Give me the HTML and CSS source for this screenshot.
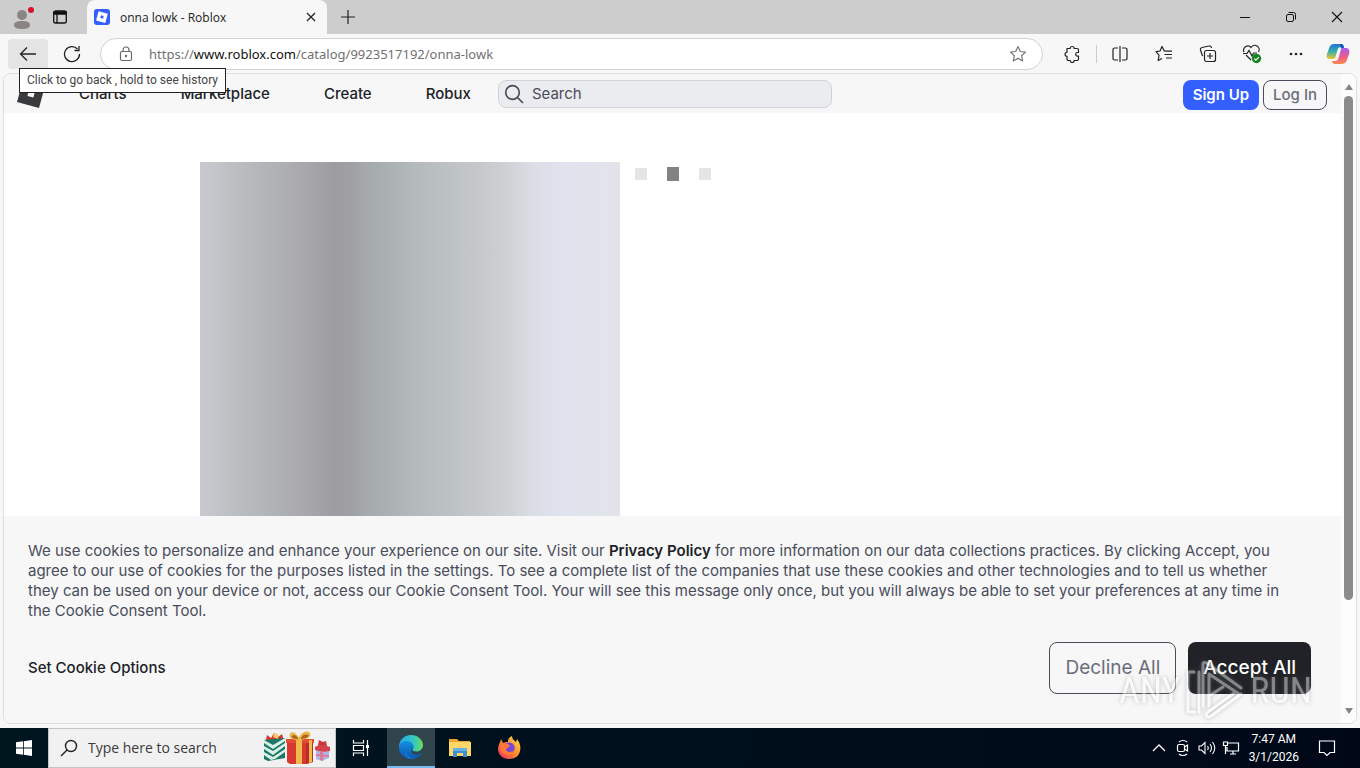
FILE: index.html
```html
<!DOCTYPE html>
<html lang="en">
<head>
<meta charset="utf-8">
<title>onna lowk - Roblox</title>
<link rel="stylesheet" href="styles.css">
</head>
<body>
<div class="desktop">
  <header class="tabstrip">
    <button class="icon-btn profile" aria-label="Profile"><svg width="26" height="26" viewBox="0 0 26 26"><circle cx="11" cy="11" r="5" fill="#8a8583"/><path d="M3 21c0-3 3-4 8-4s8 1 8 4-3.500 4-8 4-8-1-8-4z" fill="#8a8583"/><circle cx="20" cy="6" r="3" fill="#d3122b"/></svg></button>
    <button class="icon-btn workspaces" aria-label="Tab actions"><svg width="16" height="16" viewBox="0 0 16 16" fill="none" stroke="#111" stroke-width="1.300"><rect x="1.700" y="2" width="12.600" height="12" rx="2"/><path d="M2 3h12v2H2z" fill="#111"/><path d="M5 5v9"/></svg></button>
    <div class="tab">
      <svg width="16" height="16" viewBox="0 0 16 16"><rect width="16" height="16" rx="3" fill="#335fff"/><path d="M4.600 2.200l9.200 2.500-2.500 9.200-9.200-2.500z" fill="#fff"/><path d="M7 6.300l2.700.7-.7 2.700-2.700-.7z" fill="#335fff"/></svg>
      <span class="tab-title">onna lowk - Roblox</span>
      <button class="icon-btn" aria-label="Close tab"><svg width="12" height="12" viewBox="0 0 12 12" stroke="#222" stroke-width="1.300"><path d="M2 2l8 8M10 2l-8 8"/></svg></button>
    </div>
    <button class="icon-btn new-tab" aria-label="New tab"><svg width="16" height="16" viewBox="0 0 16 16" stroke="#222" stroke-width="1.200"><path d="M8 1v14M1 8h14"/></svg></button>
    <div class="window-controls">
      <button class="icon-btn" aria-label="Minimize"><svg width="12" height="12" viewBox="0 0 12 12" stroke="#111"><path d="M1 6.500h10"/></svg></button>
      <button class="icon-btn" aria-label="Restore"><svg width="12" height="12" viewBox="0 0 12 12" fill="none" stroke="#111"><rect x="1.500" y="3.500" width="7" height="7" rx="1.500"/><path d="M3.500 1.500h5a2 2 0 0 1 2 2v5"/></svg></button>
      <button class="icon-btn" aria-label="Close"><svg width="12" height="12" viewBox="0 0 12 12" stroke="#111" stroke-width="1.100"><path d="M1 1l10 10M11 1L1 11"/></svg></button>
    </div>
  </header>

  <div class="toolbar">
    <div class="back-wrap">
      <button class="icon-btn back" aria-label="Back"><svg width="18" height="16" viewBox="0 0 18 16" fill="none" stroke="#222" stroke-width="1.300"><path d="M17 8H1.500M8 1.500L1.500 8 8 14.500"/></svg></button>
      <span class="tooltip" role="tooltip">Click to go back , hold to see history</span>
    </div>
    <button class="icon-btn reload" aria-label="Refresh"><svg width="18" height="18" viewBox="0 0 18 18" fill="none" stroke="#222" stroke-width="1.300"><path d="M16.500 9A7.500 7.500 0 1 1 14.500 4M16 1v4.500h-4.500"/></svg></button>
    <div class="address">
      <svg width="14" height="16" viewBox="0 0 14 16" fill="none" stroke="#6b6b6b" stroke-width="1.200"><rect x="1.500" y="5.500" width="11" height="9" rx="1.500"/><path d="M4 5.500V4a3 3 0 0 1 6 0v1.500"/><circle cx="7" cy="10" r=".6" fill="#6b6b6b"/></svg>
      <span class="url">https://<b>www.roblox.com</b>/catalog/9923517192/onna-lowk</span>
      <button class="icon-btn" aria-label="Favorite"><svg width="18" height="18" viewBox="0 0 18 18" fill="none" stroke="#777" stroke-width="1.200" stroke-linejoin="round"><path d="M9 1.500l2.300 5 5.200.6-3.900 3.600 1.100 5.300L9 13.400 4.300 16l1.100-5.300L1.500 7.100l5.200-.6z"/></svg></button>
    </div>
    <div class="tools">
      <button class="icon-btn ext" aria-label="Extensions"><svg width="18" height="18" viewBox="0 0 18 18" fill="none" stroke="#222" stroke-width="1.200" stroke-linejoin="round"><path d="M4 3.500h3.200a2 2 0 0 1 4 0H14A1.500 1.500 0 0 1 15.500 5v2.500h-1a1.800 1.800 0 0 0 0 3.600h1V14a1.500 1.500 0 0 1-1.500 1.500h-2.800a2 2 0 0 1-4 0H5A1.500 1.500 0 0 1 4 14v-2.700a2 2 0 0 1 0-4z"/></svg></button>
      <button class="icon-btn" aria-label="Split screen"><svg width="18" height="18" viewBox="0 0 18 18" fill="none" stroke="#222" stroke-width="1.200"><path d="M7 3H3.500A1.500 1.500 0 0 0 2 4.500v9A1.500 1.500 0 0 0 3.500 15H7M11 3h3.500A1.500 1.500 0 0 1 16 4.500v9a1.500 1.500 0 0 1-1.500 1.500H11M9 1v16"/></svg></button>
      <button class="icon-btn" aria-label="Favorites"><svg width="18" height="18" viewBox="0 0 18 18" fill="none" stroke="#222" stroke-width="1.200" stroke-linejoin="round"><path d="M11.500 6.200L9.300 6 7 1.500 5 6l-4 .7 3 3.500-.8 5.300L7 13.500M11 6.200h6M9.500 9.500H17M11 13h6"/></svg></button>
      <button class="icon-btn" aria-label="Collections"><svg width="18" height="18" viewBox="0 0 18 18" fill="none" stroke="#222" stroke-width="1.200"><rect x="5.500" y="5.500" width="11" height="11" rx="2"/><path d="M11 8v6M8 11h6M3.500 11L1.500 5A2 2 0 0 1 3 2.500l7-1.500a2 2 0 0 1 2.500 2"/></svg></button>
      <button class="icon-btn" aria-label="Browser essentials"><svg width="20" height="20" viewBox="0 0 20 20" fill="none" stroke="#222" stroke-width="1.200"><path d="M2 8a4.200 4.200 0 0 1 7-4.500A4.200 4.200 0 0 1 16.500 8M4 11l5 5M1 9.500h4l2-3 3 5.500 1.500-3H15"/><circle cx="14.500" cy="14.500" r="4.700" fill="#168421" stroke="none"/><path d="M12.300 14.600l1.600 1.500 2.900-3" stroke="#fff"/></svg></button>
      <button class="icon-btn" aria-label="More"><svg width="18" height="18" viewBox="0 0 18 18" fill="#222"><circle cx="4" cy="9" r="1.300"/><circle cx="9" cy="9" r="1.300"/><circle cx="14" cy="9" r="1.300"/></svg></button>
      <button class="icon-btn" aria-label="Copilot"><svg width="24" height="22" viewBox="0 0 24 22"><defs><linearGradient id="cpA" x2="0" y2="1"><stop stop-color="#1d74d8"/><stop offset=".5" stop-color="#35b1a8"/><stop offset="1" stop-color="#f4c530"/></linearGradient><linearGradient id="cpB" x2="0" y2="1"><stop stop-color="#a45cf0"/><stop offset=".55" stop-color="#ee5b86"/><stop offset="1" stop-color="#f98c4c"/></linearGradient></defs><path d="M8 1h7c2 0 2.500 1 3 3h-3c-2 0-3 1-3.500 3l-2 7c-.5 2-1.500 2-3.500 2H4c-3 0-4-2-3-5L3.500 4C4.500 2 6 1 8 1z" fill="url(#cpA)"/><path d="M16 21H9c-2 0-2.500-1-3-3h3c2 0 3-1 3.500-3l2-7c.5-2 1.500-3 3.500-3h2c3 0 4 3 3 6l-2.500 7c-1 2-2.500 3-4.500 3z" fill="url(#cpB)"/><path d="M14 1c3 0 3.500 1 4 4-1 0-2 0-3 1z" fill="#1754bd"/></svg></button>
    </div>
  </div>

  <main class="frame">
    <div class="viewport">
      <nav class="site-nav">
        <a class="logo" href="#" aria-label="Roblox"><svg width="28" height="28" viewBox="0 0 28 28"><path d="M6 0l22 6-6 22-22-6z" fill="#393b3d"/><path d="M12 10l6 1.600-1.600 6-6-1.600z" fill="#f7f7f8"/></svg></a>
        <div class="links"><a href="#">Charts</a><a href="#">Marketplace</a><a href="#">Create</a><a href="#">Robux</a></div>
        <label class="site-search"><svg width="20" height="20" viewBox="0 0 20 20" fill="none" stroke="#494d5a" stroke-width="1.700"><circle cx="8.500" cy="8.500" r="6.800"/><path d="M13.500 13.500L19 19"/></svg><input type="text" placeholder="Search" aria-label="Search"></label>
        <div class="auth"><button class="signup">Sign Up</button><button class="login">Log In</button></div>
      </nav>
      <section class="item">
        <div class="thumb"></div>
        <div class="loading"><i></i><i class="on"></i><i></i></div>
      </section>
      <section class="cookie">
        <p>We use cookies to personalize and enhance your experience on our site. Visit our <a href="#">Privacy Policy</a> for more information on our data collections practices. By clicking Accept, you agree to our use of cookies for the purposes listed in the settings. To see a complete list of the companies that use these cookies and other technologies and to tell us whether they can be used on your device or not, access our Cookie Consent Tool. Your will see this message only once, but you will always be able to set your preferences at any time in the Cookie Consent Tool.</p>
        <div class="cookie-actions">
          <button class="options">Set Cookie Options</button>
          <button class="decline">Decline All</button>
          <button class="accept">Accept All</button>
        </div>
      </section>
    </div>
    <div class="scrollbar"><i class="up"></i><i class="grip"></i><i class="down"></i></div>
  </main>

  <footer class="taskbar">
    <button class="start" aria-label="Start"><svg width="16" height="16" viewBox="0 0 16 16" fill="#fff"><path d="M0 2.300L7 1.300v6.300H0zM7.800 1.200L16 0v7.600H7.800zM0 8.400h7v6.300l-7-1zM7.800 8.400H16V16l-8.200-1.200z"/></svg></button>
    <label class="task-search">
      <svg width="18" height="18" viewBox="0 0 18 18" fill="none" stroke="#222" stroke-width="1.400"><circle cx="11" cy="7" r="5.500"/><path d="M7 11l-6 6"/></svg>
      <input type="text" placeholder="Type here to search" aria-label="Type here to search">
      <svg class="gifts" width="68" height="34" viewBox="0 0 68 34">
        <path d="M3 9l1-5 4 3 3-5 4 4 4-3 2 7z" fill="#d8362f"/><path d="M10 6l1-4 4 1v5z" fill="#f2cf68"/>
        <path d="M1 9l21-2v20l-17 3-4-2z" fill="#16796a"/><path d="M1 9l9 5 12-7v3L10 18l-9-6zM1 15l9 5 12-8v3L10 24l-9-6zM1 21l9 5 12-8v3L12 28l-4 1-7-5z" fill="#d9f0e2"/>
        <path d="M24 10h26v21l-7 2H27l-3-2z" fill="#d93831"/><path d="M43 10h7v21l-7 2z" fill="#b92c2a"/><path d="M23 8h28v4H23z" fill="#e44b37"/><path d="M33 8h6v25h-6zM46 9h3v22l-3 1z" fill="#f0bb4d"/><path d="M36 9C30 9 25 7 27 3c1-3 6-2 9 4 2-6 8-8 11-5 2 4-4 7-11 7z" fill="#edb343"/><path d="M35 7c-2-3-5-4-6-2s2 3 6 3zm3 0c2-4 5-4 7-3s-2 4-7 4z" fill="#a76722"/>
        <path d="M53 17h13v10l-7 3-6-2z" fill="#a9b8ea"/><path d="M52 16l6-3 9 3v4l-8 1-7-2z" fill="#d7414a"/><path d="M55 14l1-5 4 2 3-1 1 5z" fill="#c8383f"/><path d="M57 20h3v10l-3-1zM53 23l13 1v2l-13-1z" fill="#e17891"/>
      </svg>
    </label>
    <button class="task" aria-label="Task View"><svg width="18" height="18" viewBox="0 0 18 18" fill="none" stroke="#fff" stroke-width="1.200"><path d="M1.500 1v3h10V1M1.500 17v-3h10v3M1.500 6.500h10v5h-10zM15.500 1v16"/><path d="M14 6h3v3h-3z" fill="#fff" stroke="none"/></svg></button>
    <button class="task active" aria-label="Microsoft Edge"><svg width="24" height="24" viewBox="0 0 24 24"><defs><linearGradient id="edA"><stop stop-color="#29a8e8"/><stop offset=".6" stop-color="#32c7c4"/><stop offset="1" stop-color="#70dc56"/></linearGradient><linearGradient id="edB" x2="0" y2="1"><stop stop-color="#1590df"/><stop offset="1" stop-color="#0b54ad"/></linearGradient></defs><path d="M0 12C0 5 5 0 12 0s12 5 12 10c0 4-3 6.500-6.500 6.500-3 0-4.500-1-4-2 2-3 0-6-4-6S1 10 0 12z" fill="url(#edA)"/><path d="M0 13c0-5 4-7 8-7s7 3 6.500 7c-1 0-3 1-2 4 1 3 5 4 10 1-2 4-6 6-10 6C5 24 0 19 0 13z" fill="url(#edB)"/><path d="M8 13c-2 4 1 10 8 10-3 1.500-7 1-9-1-3-3-2-8 1-9z" fill="#1173cb"/></svg></button>
    <button class="task" aria-label="File Explorer"><svg width="22" height="20" viewBox="0 0 22 20"><path d="M0 1h8l2 2h11v5H0z" fill="#e9a92c"/><path d="M0 4h22v14H0z" fill="#ffd768"/><path d="M4 10h14v9h-4v-4H8v4H4z" fill="#3b91d0"/><path d="M4 10h14v3H4z" fill="#62b2e5"/></svg></button>
    <button class="task" aria-label="Firefox"><svg width="24" height="24" viewBox="0 0 24 24"><defs><linearGradient id="ff" x1="1" x2="0" y2="1"><stop stop-color="#ffe34d"/><stop offset=".5" stop-color="#ff8a2a"/><stop offset="1" stop-color="#f0256f"/></linearGradient></defs><path d="M4 3l2 4c2-1 3-1 5-1 0-3 1-5 4-6 0 3 2 4 4 6l1-3c3 4 4 8 3 12-1 5-5 8-11 8S1 19 1 13c0-4 2-6 3-10z" fill="url(#ff)"/><path d="M8 8c2-2 6-2 8 0 3 3 2 8-2 9-5 1-8-4-6-9z" fill="#7845d8"/><path d="M4 8c3-2 6-1 8 1l1 1c-1 2-3 1-4 3 0 3 4 4 7 2-1 4-6 5-10 2-3-2-3-5-2-9z" fill="#ff7a35"/></svg></button>
    <div class="tray">
      <svg width="18" height="14" viewBox="0 0 14 14" fill="none" stroke="#fff" stroke-width="1.300"><path d="M1 10l6-6 6 6"/></svg>
      <svg width="18" height="18" viewBox="0 0 14 18" fill="none" stroke="#fff" stroke-width="1.200"><rect x="1.500" y="5.500" width="7" height="7" rx="1.500"/><path d="M8.500 8l3-2v6l-3-2M3 3c2-2 6-2 8 0M3 15c2 2 6 2 8 0"/></svg>
      <svg width="18" height="16" viewBox="0 0 18 16" fill="none" stroke="#fff" stroke-width="1.100"><path d="M1 6h2.500L7 2.500v11L3.500 10H1zM9.500 6q1.500 2 0 4M12 4q3 4 0 8M14.500 2q4.500 6 0 12"/></svg>
      <svg width="18" height="16" viewBox="0 0 18 16" fill="none" stroke="#fff" stroke-width="1.200"><path d="M6 3h10.500v8H5V7M8 14h6M11 11v3M1.500 2h4v3.500h-4zM3.500 5.500V14"/></svg>
      <div class="clock"><span>7:47 AM</span><span>3/1/2026</span></div>
      <svg width="18" height="18" viewBox="0 0 18 18" fill="none" stroke="#fff" stroke-width="1.200"><path d="M1.500 2h15v11.500H12L9 16.500l-3-3H1.500z"/></svg>
    </div>
  </footer>

  <div class="watermark" aria-hidden="true"><span>ANY</span><svg width="60" height="62" viewBox="0 0 60 62" fill="none" stroke="#fff" stroke-width="3" stroke-linejoin="round" stroke-linecap="round"><path d="M10 52H3V12h6M14 52V12M18 46V4c0-2 3-2 5 0l33 24M24 14v32M24 14l30 20M56 34L26 56c-4 3-7-1-3-4l26-19M24 36l14-9"/></svg><span>RUN</span></div>
</div>
</body>
</html>
```
FILE: styles.css
```css
* { box-sizing: border-box; }
body { margin: 0; font-family: Inter, "Noto Sans", sans-serif; color: #222; }
button { border: 0; background: none; padding: 0; font: inherit; color: inherit; }
a { color: inherit; text-decoration: none; }
input { border: 0; background: none; padding: 0; font: inherit; min-width: 0; outline: 0; }
svg { display: block; flex: none; }

.desktop { position: relative; display: flex; flex-direction: column; height: 100vh; overflow: hidden; background: #f7f7f7; }
.icon-btn { display: flex; align-items: center; justify-content: center; flex: none; }

.tabstrip { display: flex; height: 34px; flex: none; background: #cdcdcd; }
.profile { width: 46px; padding-left: 2px; }
.workspaces { width: 28px; }
.tab { display: flex; align-items: center; width: 240px; margin-left: 13px; padding: 0 8px 0 7px; gap: 10px; background: #f7f7f7; border-radius: 8px 8px 0 0; font-size: 12px; font-family: "Open Sans", sans-serif; }
.tab-title { flex: 1; }
.tab .icon-btn { width: 16px; }
.new-tab { width: 42px; }
.window-controls { display: flex; margin-left: auto; }
.window-controls .icon-btn { width: 46px; }

.toolbar { display: flex; align-items: center; height: 39px; flex: none; padding: 0 8px; }
.back-wrap { position: relative; }
.back { width: 40px; height: 30px; background: #e4e4e4; border-radius: 4px; }
.tooltip { position: absolute; z-index: 2; top: 29px; left: 11px; padding: 0 7px; border: 1px solid #222; background: #fff; font: 12px/23px Roboto, sans-serif; color: #444; white-space: nowrap; }
.reload { width: 48px; }
.address { display: flex; align-items: center; flex: 1; height: 32px; margin-left: 4px; padding: 0 15px 0 18px; gap: 16px; border: 1px solid #d2d2d2; border-radius: 16px; background: #fff; }
.url { flex: 1; font: 13px/20px "Noto Sans", sans-serif; color: #717171; }
.url b { font-weight: 400; color: #111; }
.tools { display: flex; align-items: center; }
.tools .icon-btn { width: 44px; }
.tools .ext { width: 52px; margin-left: 3px; }
.tools .ext::after { content: ""; width: 1px; height: 18px; margin: 0 -16px 0 15px; background: #ccc; }
.tools .icon-btn:last-child { width: 40px; margin-right: -6px; }

.frame { display: flex; flex: 1; min-height: 0; margin: 0 3px 4px; border: 1px solid #dedede; border-radius: 8px; overflow: hidden; background: #fff; }
.viewport { display: flex; flex-direction: column; flex: 1; min-width: 0; }
.site-nav { display: flex; align-items: center; height: 39px; flex: none; padding: 0 14px 0 13px; background: #f7f7f8; }
.links { display: flex; gap: 54px; margin: 0 27px 0 34px; font-size: 15px; font-weight: 500; line-height: 24px; color: #202227; }
.site-search { display: flex; align-items: center; width: 334px; height: 28px; padding: 0 5px; gap: 8px; border: 1px solid #d0d2d7; border-radius: 8px; background: #ebecf0; font-size: 15px; }
.site-search input { flex: 1; }
.site-search input::placeholder { color: #494d5a; opacity: 1; }
.auth { display: flex; gap: 4px; margin-left: auto; padding-top: 2px; font-size: 15px; }
.auth button { height: 30px; padding: 0 9px; border-radius: 8px; }
.auth .signup { padding: 0 10px; background: #335fff; color: #fff; font-weight: 600; }
.auth .login { border: 1px solid #494d5a; color: #6b6e78; font-weight: 500; }

.item { display: flex; flex: 1; min-height: 0; padding: 49px 0 0 196px; gap: 15px; overflow: hidden; }
.thumb { width: 420px; background: linear-gradient(to right, #c9cad0, #bec2c5 6%, #adb1b4 19%, #aaa9ae 24%, #9d9ca1 32%, #9f9fa4 36%, #a3a8aa 39%, #b4b9bb 51%, #c4c8ca 66%, #d0d3d6 74%, #dadde5 79%, #dde0e9 82%, #e0e3ed 86%, #e2e4ec 97%, #e3e2e8); }
.loading { display: flex; align-items: center; gap: 20px; height: 24px; }
.loading i { width: 12px; height: 12px; background: #e5e5e5; }
.loading .on { height: 14px; background: #828282; }

.cookie { flex: none; padding: 25px 30px 29px 24px; background: #f7f7f8; color: #494d5a; font-size: 15px; line-height: 20px; }
.cookie p { margin: 0 0 21px; padding-right: 14px; }
.cookie p a { color: #202227; font-weight: 600; }
.cookie-actions { display: flex; align-items: center; gap: 12px; }
.options { margin-right: auto; color: #202227; font-weight: 500; }
.decline, .accept { height: 52px; padding: 0 15px; border-radius: 8px; font-size: 19px; }
.decline { border: 1px solid #494d5a; color: #6b6e78; }
.accept { background: #202227; color: #fff; font-weight: 500; }

.scrollbar { display: flex; flex-direction: column; align-items: center; width: 15px; padding: 10px 0 9px; background: #fcfcfc; }
.up, .down { border: 4px solid transparent; }
.up { border-top: 0; border-bottom: 6px solid #858585; }
.down { border-bottom: 0; border-top: 6px solid #858585; margin-top: auto; }
.grip { width: 9px; height: 80%; margin-top: 6px; border-radius: 5px; background: #8b8b8b; }

.taskbar { display: flex; height: 40px; flex: none; background: linear-gradient(to right, #00161f, #000e1c 60%, #000818); color: #fff; }
.start, .task { display: flex; align-items: center; justify-content: center; width: 48px; flex: none; }
.task { width: 49px; }
.active { width: 48px; margin-left: 2px; border-bottom: 2px solid #76b9ed; background: #30444c; }
.task-search { display: flex; align-items: center; width: 288px; padding: 0 4px 0 11px; gap: 10px; border: 1px solid #c4c4c4; background: #f1f1f1; font: 14px/20px "Open Sans", sans-serif; }
.task-search input { flex: 1; }
.task-search input::placeholder { color: #3a3a3a; opacity: 1; }
.tray { display: flex; align-items: center; gap: 6px; margin-left: auto; padding-right: 24px; }
.clock { display: flex; flex-direction: column; align-items: center; margin: 0 13px 0 3px; font: 12px/18px Roboto, sans-serif; }

.watermark { position: absolute; right: 48px; bottom: 46px; display: flex; align-items: center; gap: 5px; color: #fff; opacity: .45; font: 36px/40px "Liberation Sans Narrow", "Roboto Condensed", "Liberation Sans", sans-serif; filter: drop-shadow(0 0 2px #777); pointer-events: none; }
```
